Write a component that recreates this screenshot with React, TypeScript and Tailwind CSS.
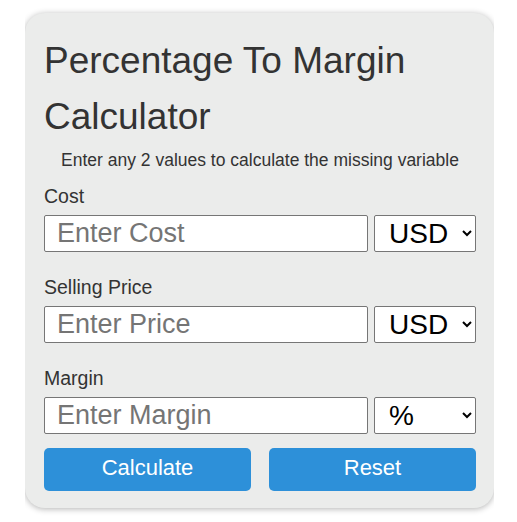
import { useState } from "react";

// Percentage to margin calculator card
const FONT = { fontFamily: '"Liberation Sans", Arial, sans-serif' };

function Field({
  label,
  placeholder,
  unit,
  options,
  value,
  onChange,
}: {
  label: string;
  placeholder: string;
  unit: string;
  options: string[];
  value: string;
  onChange: (v: string) => void;
}) {
  return (
    <div>
      <label className="block text-[19.5px] leading-[27px] text-[#333]">{label}</label>
      <div className="flex gap-[6px] mt-[5px]">
        <input
          type="text"
          value={value}
          onChange={(e) => onChange(e.target.value)}
          placeholder={placeholder}
          className="flex-1 min-w-0 h-[37px] border border-[#767676] rounded-[2px] bg-white px-[12px] text-[27px] text-black placeholder:text-[#757575] outline-none"
        />
        <select
          defaultValue={unit}
          className="w-[102px] h-[37px] border border-[#767676] rounded-[2px] bg-white pl-[10px] pr-[4px] text-[28px] text-black outline-none"
        >
          {options.map((o) => (
            <option key={o}>{o}</option>
          ))}
        </select>
      </div>
    </div>
  );
}

export default function App() {
  const [cost, setCost] = useState("");
  const [price, setPrice] = useState("");
  const [margin, setMargin] = useState("");

  const handleCalculate = () => {
    const c = parseFloat(cost);
    const p = parseFloat(price);
    const m = parseFloat(margin);
    if (!isNaN(c) && !isNaN(p) && p !== 0) {
      setMargin((((p - c) / p) * 100).toFixed(2));
    } else if (!isNaN(c) && !isNaN(m) && m !== 100) {
      setPrice((c / (1 - m / 100)).toFixed(2));
    } else if (!isNaN(p) && !isNaN(m)) {
      setCost((p * (1 - m / 100)).toFixed(2));
    }
  };

  const handleReset = () => {
    setCost("");
    setPrice("");
    setMargin("");
  };

  return (
    <div className="min-h-screen bg-white" style={FONT}>
      {/* clipped wrapper, the card shadow only shows round the corners */}
      <div className="ml-[25px] w-[469px] pt-[13px] pb-[14px] overflow-hidden">
        <div className="bg-[#ebeceb] rounded-[20px] shadow-[0_1px_6px_rgba(0,0,0,0.3)] pl-[19px] pr-[18px] pt-[20px] pb-[17px]">
          <h1 className="text-[37px] leading-[56px] font-normal text-[#333]">
            Percentage To Margin Calculator
          </h1>
          <p className="mt-[3px] text-center text-[17.5px] leading-[24px] text-[#333]">
            Enter any 2 values to calculate the missing variable
          </p>

          <div className="mt-[11px]">
            <Field
              label="Cost"
              placeholder="Enter Cost"
              unit="USD"
              options={["USD", "EUR", "GBP"]}
              value={cost}
              onChange={setCost}
            />
          </div>
          <div className="mt-[22px]">
            <Field
              label="Selling Price"
              placeholder="Enter Price"
              unit="USD"
              options={["USD", "EUR", "GBP"]}
              value={price}
              onChange={setPrice}
            />
          </div>
          <div className="mt-[22px]">
            <Field
              label="Margin"
              placeholder="Enter Margin"
              unit="%"
              options={["%"]}
              value={margin}
              onChange={setMargin}
            />
          </div>

          <div className="grid grid-cols-2 gap-[18px] mt-[14px]">
            <button
              onClick={handleCalculate}
              className="h-[43px] rounded-[5px] bg-[#2d90d9] text-white text-[22px] leading-[26px] pb-[3px]"
            >
              Calculate
            </button>
            <button
              onClick={handleReset}
              className="h-[43px] rounded-[5px] bg-[#2d90d9] text-white text-[22px] leading-[26px] pb-[3px]"
            >
              Reset
            </button>
          </div>
        </div>
      </div>
    </div>
  );
}
